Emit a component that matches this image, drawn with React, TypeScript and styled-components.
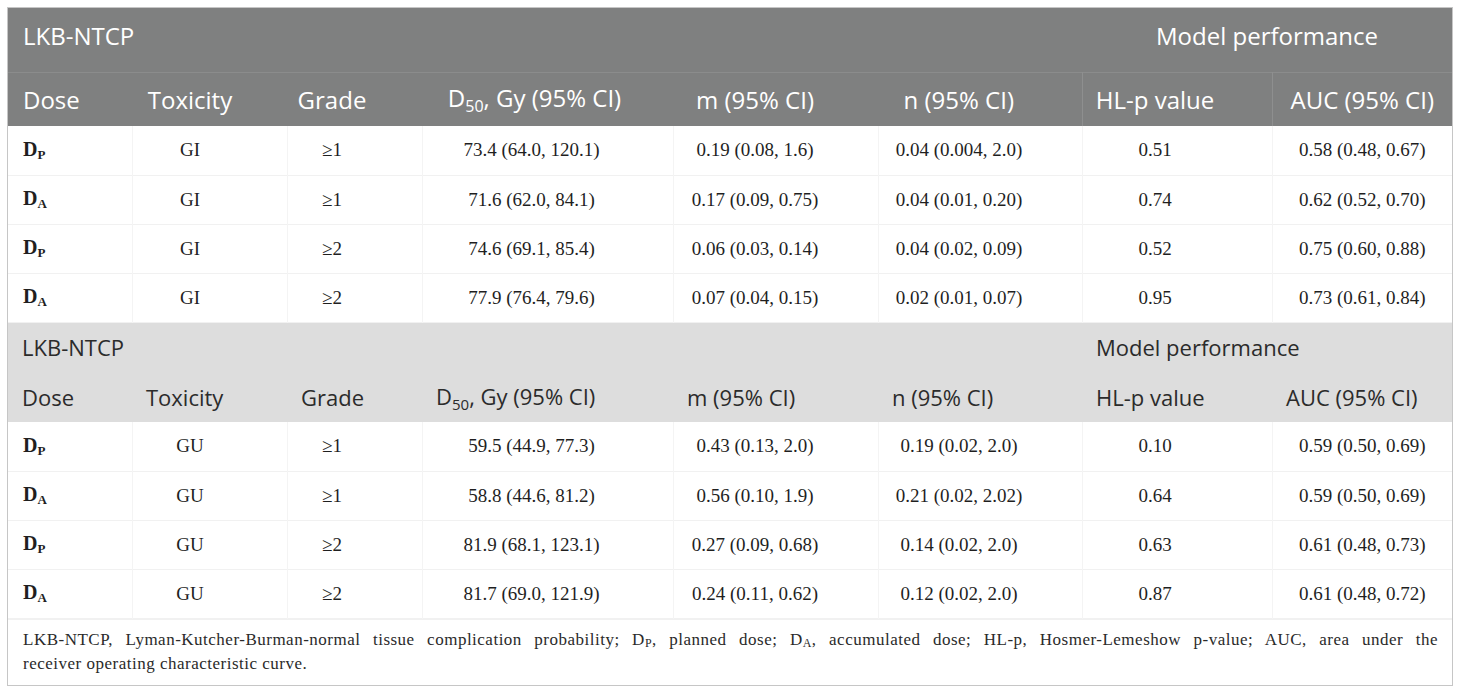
import React from 'react';
import styled, { createGlobalStyle } from 'styled-components';

const GlobalStyle = createGlobalStyle`
  body {
    margin: 0;
    background: #ffffff;
  }
`;

const Frame = styled.div`
  margin: 7px 0 0 7px;
  width: 1444px;
  border: 1px solid #c6c6c6;
`;

const Table = styled.table`
  width: 1444px;
  border-collapse: collapse;
  table-layout: fixed;
`;

const DarkRow = styled.tr<{ $h: number }>`
  background: #7f8080;
  height: ${(p) => p.$h}px;
  & + & {
    border-top: 1px solid #8b8c8c;
  }
`;

const LightRow = styled.tr<{ $h: number }>`
  background: #dddddd;
  height: ${(p) => p.$h}px;
`;

const DarkHead = styled.th<{ $left?: boolean; $pr?: number; $line?: boolean; $lift?: boolean }>`
  font-family: 'Open Sans', 'Noto Sans', sans-serif;
  font-weight: 400;
  font-size: 24px;
  color: #ffffff;
  text-align: ${(p) => (p.$left ? 'left' : 'center')};
  padding: 0 ${(p) => p.$pr ?? 0}px ${(p) => (p.$lift ? 8 : 0)}px ${(p) => (p.$left ? 15 : 0)}px;
  border-left: ${(p) => (p.$line ? '1px solid #8e8f8f' : 'none')};
  white-space: nowrap;
  vertical-align: middle;
`;

const LightHead = styled.th<{ $pl?: number }>`
  font-family: 'Open Sans', 'Noto Sans', sans-serif;
  font-weight: 400;
  font-size: 22px;
  color: #2b2b2b;
  text-align: left;
  padding: 0 0 0 ${(p) => p.$pl ?? 14}px;
  white-space: nowrap;
  vertical-align: middle;
`;

const BodyRow = styled.tr`
  height: 49px;
  border-bottom: 1px solid #f1f1f1;
`;

const Cell = styled.td<{ $first?: boolean; $last?: boolean; $pr?: number }>`
  font-family: 'Liberation Serif', 'Times New Roman', serif;
  font-size: 19px;
  color: #1f1f1f;
  text-align: ${(p) => (p.$first ? 'left' : 'center')};
  padding: 0 ${(p) => p.$pr ?? 0}px 0 ${(p) => (p.$first ? 15 : 0)}px;
  border-right: ${(p) => (p.$last ? 'none' : '1px solid #f4f4f4')};
  white-space: nowrap;
  vertical-align: middle;
`;

const DoseLabel = styled.span`
  font-weight: 700;
  font-size: 20px;
`;

const SubBold = styled.sub`
  font-size: 13px;
  vertical-align: -3px;
`;

const SubSans = styled.sub<{ $size: number }>`
  font-size: ${(p) => p.$size}px;
  vertical-align: -5px;
`;

const Footnote = styled.div`
  font-family: 'Liberation Serif', 'Times New Roman', serif;
  font-size: 17px;
  letter-spacing: 0.5px;
  line-height: 24px;
  color: #2a2a2a;
  padding: 8px 14px 9px 15px;
  border-top: 1px solid #f1f1f1;
`;

const FullLine = styled.span`
  display: block;
  text-align: justify;
  text-align-last: justify;
`;

const SmallSub = styled.sub`
  font-size: 12px;
  line-height: 0;
  vertical-align: -2px;
`;

const widths = [124, 155, 135, 251, 205, 204, 190, 180];
// right padding shifts the centred text left, as in the source table
const shifts = [0, 39, 45, 32, 41, 42, 44, 0];

type Row = [string, string, string, string, string, string, string, string];

const giRows: Row[] = [
  ['P', 'GI', '≥1', '73.4 (64.0, 120.1)', '0.19 (0.08, 1.6)', '0.04 (0.004, 2.0)', '0.51', '0.58 (0.48, 0.67)'],
  ['A', 'GI', '≥1', '71.6 (62.0, 84.1)', '0.17 (0.09, 0.75)', '0.04 (0.01, 0.20)', '0.74', '0.62 (0.52, 0.70)'],
  ['P', 'GI', '≥2', '74.6 (69.1, 85.4)', '0.06 (0.03, 0.14)', '0.04 (0.02, 0.09)', '0.52', '0.75 (0.60, 0.88)'],
  ['A', 'GI', '≥2', '77.9 (76.4, 79.6)', '0.07 (0.04, 0.15)', '0.02 (0.01, 0.07)', '0.95', '0.73 (0.61, 0.84)'],
];

const guRows: Row[] = [
  ['P', 'GU', '≥1', '59.5 (44.9, 77.3)', '0.43 (0.13, 2.0)', '0.19 (0.02, 2.0)', '0.10', '0.59 (0.50, 0.69)'],
  ['A', 'GU', '≥1', '58.8 (44.6, 81.2)', '0.56 (0.10, 1.9)', '0.21 (0.02, 2.02)', '0.64', '0.59 (0.50, 0.69)'],
  ['P', 'GU', '≥2', '81.9 (68.1, 123.1)', '0.27 (0.09, 0.68)', '0.14 (0.02, 2.0)', '0.63', '0.61 (0.48, 0.73)'],
  ['A', 'GU', '≥2', '81.7 (69.0, 121.9)', '0.24 (0.11, 0.62)', '0.12 (0.02, 2.0)', '0.87', '0.61 (0.48, 0.72)'],
];

const DataRows: React.FC<{ rows: Row[] }> = ({ rows }) => (
  <>
    {rows.map((r, i) => (
      <BodyRow key={i}>
        <Cell $first>
          <DoseLabel>
            D<SubBold>{r[0]}</SubBold>
          </DoseLabel>
        </Cell>
        {r.slice(1).map((v, j) => (
          <Cell key={j} $last={j === 6} $pr={shifts[j + 1]}>
            {v}
          </Cell>
        ))}
      </BodyRow>
    ))}
  </>
);

const D50: React.FC<{ sub: number }> = ({ sub }) => (
  <>
    D<SubSans $size={sub}>50</SubSans>, Gy (95% CI)
  </>
);

const App: React.FC = () => {
  return (
    <>
      <GlobalStyle />
      <Frame>
        <Table>
          <colgroup>
            {widths.map((w, i) => (
              <col key={i} style={{ width: w }} />
            ))}
          </colgroup>
          <tbody>
            <DarkRow $h={64}>
              <DarkHead colSpan={6} $left $lift>
                LKB-NTCP
              </DarkHead>
              <DarkHead colSpan={2} $lift>
                Model performance
              </DarkHead>
            </DarkRow>
            <DarkRow $h={54}>
              <DarkHead $left>Dose</DarkHead>
              <DarkHead $pr={shifts[1]}>Toxicity</DarkHead>
              <DarkHead $pr={shifts[2]}>Grade</DarkHead>
              <DarkHead $pr={shifts[3] - 6}>
                <D50 sub={16} />
              </DarkHead>
              <DarkHead $pr={shifts[4]}>m (95% CI)</DarkHead>
              <DarkHead $pr={shifts[5]}>n (95% CI)</DarkHead>
              <DarkHead $pr={shifts[6]} $line>
                HL-p value
              </DarkHead>
              <DarkHead $line>AUC (95% CI)</DarkHead>
            </DarkRow>
            <DataRows rows={giRows} />
            <LightRow $h={50}>
              <LightHead colSpan={6}>LKB-NTCP</LightHead>
              <LightHead colSpan={2}>Model performance</LightHead>
            </LightRow>
            <LightRow $h={50}>
              <LightHead>Dose</LightHead>
              <LightHead>Toxicity</LightHead>
              <LightHead>Grade</LightHead>
              <LightHead>
                <D50 sub={15} />
              </LightHead>
              <LightHead>m (95% CI)</LightHead>
              <LightHead>n (95% CI)</LightHead>
              <LightHead>HL-p value</LightHead>
              <LightHead>AUC (95% CI)</LightHead>
            </LightRow>
            <DataRows rows={guRows} />
          </tbody>
        </Table>
        <Footnote>
          <FullLine>
            LKB-NTCP, Lyman-Kutcher-Burman-normal tissue complication probability; D<SmallSub>P</SmallSub>, planned
            dose; D<SmallSub>A</SmallSub>, accumulated dose; HL-p, Hosmer-Lemeshow p-value; AUC, area under the
          </FullLine>
          receiver operating characteristic curve.
        </Footnote>
      </Frame>
    </>
  );
};

export default App;
